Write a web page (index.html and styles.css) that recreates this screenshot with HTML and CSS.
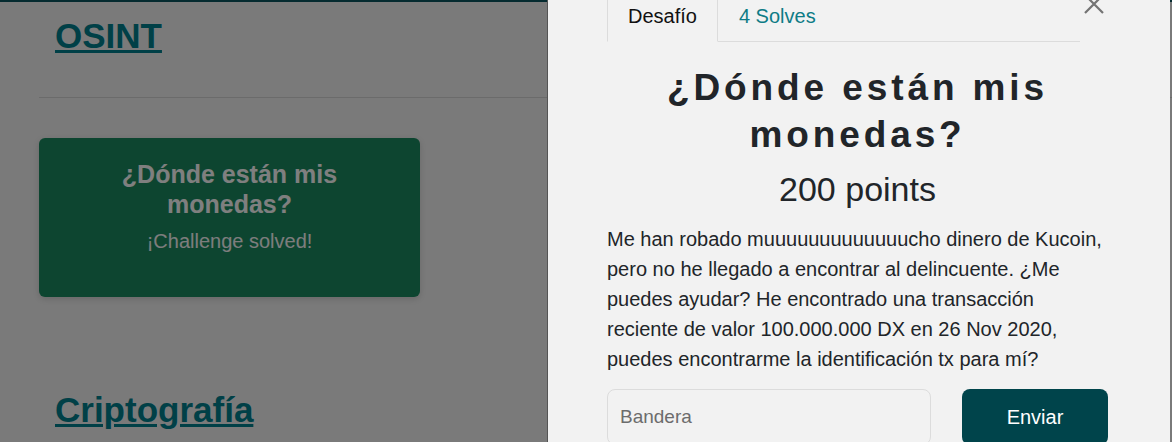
FILE: index.html
```html
<!DOCTYPE html>
<html lang="es">
<head>
<meta charset="utf-8">
<title>Desafíos</title>
<link rel="stylesheet" href="styles.css">
</head>
<body>
<div class="page">
  <div class="topbar"></div>
  <main class="content">
    <section class="category">
      <h2 class="cat-title"><a href="#">OSINT</a></h2>
      <hr class="divider">
      <div class="cards">
        <div class="card solved">
          <div class="card-title">¿Dónde están mis monedas?</div>
          <div class="card-status">¡Challenge solved!</div>
        </div>
      </div>
    </section>
    <section class="category">
      <h2 class="cat-title"><a href="#">Criptografía</a></h2>
    </section>
  </main>
</div>
<div class="overlay"></div>
<aside class="modal">
  <div class="tab-row">
    <nav class="tabs">
      <a class="tab active" href="#">Desafío</a>
      <a class="tab" href="#">4 Solves</a>
    </nav>
    <button class="close" aria-label="Cerrar">
      <svg width="22" height="22" viewBox="0 0 22 22"><path d="M2 2 L20 20 M20 2 L2 20" stroke="#747474" stroke-width="2.2" fill="none"/></svg>
    </button>
  </div>
  <h1 class="ch-title">¿Dónde están mis monedas?</h1>
  <div class="ch-points">200 points</div>
  <p class="ch-desc">Me han robado muuuuuuuuuuuuucho dinero de Kucoin, pero no he llegado a encontrar al delincuente. ¿Me puedes ayudar? He encontrado una transacción reciente de valor 100.000.000 DX en 26 Nov 2020, puedes encontrarme la identificación tx para mí?</p>
  <form class="flag-form">
    <input class="flag-input" type="text" placeholder="Bandera">
    <button class="submit" type="button">Enviar</button>
  </form>
</aside>
</body>
</html>
```

FILE: styles.css
```css
* { box-sizing: border-box; }
html, body { margin: 0; height: 100%; overflow: hidden; }
body {
  font-family: "Liberation Sans", Arial, sans-serif;
  background: #f4f4f4;
  position: relative;
  width: 1172px;
  height: 442px;
}
.topbar { height: 2px; background: #0a5660; }
.content { padding-left: 39px; }
.category { display: flex; flex-direction: column; }
.cat-title {
  margin: 14px 0 0;
  padding-left: 16px;
  font-size: 35px;
  font-weight: bold;
  line-height: 40px;
}
.cat-title a { color: #00808e; text-decoration: underline; text-decoration-thickness: 3px; text-underline-offset: 2px; }
.divider { border: 0; border-top: 1px solid #d6d6d6; margin: 41px 0 0; }
.cards { display: flex; padding-top: 40px; }
.card {
  width: 381px;
  height: 159px;
  border-radius: 6px;
  background: #1a8b61;
  color: #fff;
  text-align: center;
  padding: 21px 50px 0;
  box-shadow: 0 2px 6px rgba(0,0,0,.15);
}
.card-title { font-size: 25px; font-weight: bold; line-height: 30px; }
.card-status { font-size: 20px; margin-top: 11px; color: #fafafa; }
.category + .category .cat-title { margin-top: 93px; }

.overlay {
  position: absolute; inset: 0;
  background: rgba(0,0,0,.5);
}
.modal {
  position: absolute; top: 0; left: 547px;
  width: 623px; height: 442px;
  background: #f2f2f2;
  border-left: 1px solid #555;
  padding: 0 62px 0 59px;
  color: #212529;
}
.tab-row { display: flex; align-items: flex-start; }
.tabs {
  display: flex;
  width: 473px;
  height: 42px;
  border-bottom: 1px solid #dcdcdc;
}
.tab {
  display: block;
  padding: 0 20px;
  line-height: 33px;
  height: 42px;
  font-size: 20px;
  color: #0e7c86;
  text-decoration: none;
  border: 1px solid transparent;
  border-top: 0;
}
.tab.active { color: #111; border-color: #dcdcdc; border-bottom-color: #f2f2f2; background: #f2f2f2; }
.close {
  margin: -7px 0 0 3px;
  padding: 0;
  border: 0;
  background: none;
  width: 22px; height: 22px;
}
.ch-title {
  margin: 22px 0 0;
  text-align: center;
  font-size: 37px;
  font-weight: bold;
  letter-spacing: 3.9px;
  line-height: 47px;
}
.ch-points { text-align: center; font-size: 34px; line-height: 38px; margin-top: 12px; }
.ch-desc {
  margin: 16px 0 0;
  font-size: 20px;
  line-height: 30px;
  max-width: 498px;
}
.flag-form { display: flex; gap: 31px; margin-top: 15px; }
.flag-input {
  width: 324px; height: 56px;
  border: 1px solid #dcdcdc;
  border-radius: 8px;
  background: #f2f2f2;
  font-family: inherit;
  font-size: 19px;
  padding: 0 12px;
}
.flag-input::placeholder { color: #6c6c6c; }
.submit {
  width: 146px; height: 56px;
  border: 0; border-radius: 8px;
  background: #00444b;
  color: #fff;
  font-family: inherit;
  font-size: 20px;
}
```
